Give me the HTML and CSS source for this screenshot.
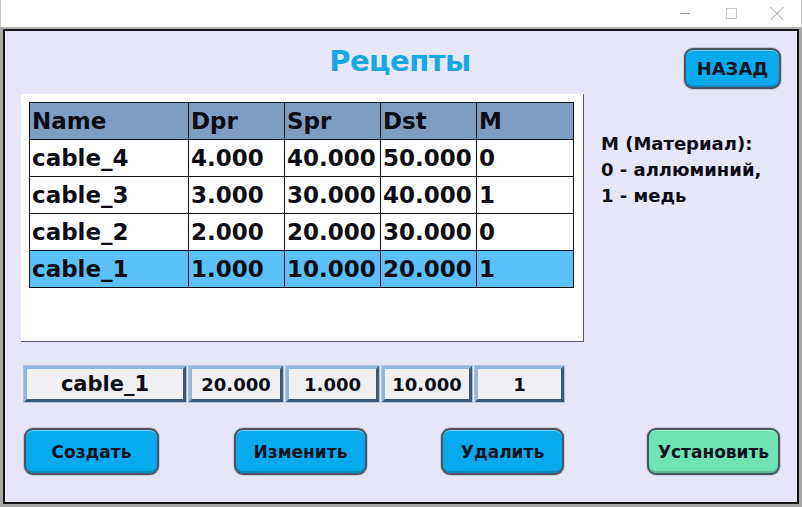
FILE: index.html
```html
<!DOCTYPE html>
<html lang="ru">
<head>
<meta charset="utf-8">
<title>Рецепты</title>
<link rel="stylesheet" href="styles.css">
</head>
<body>
<div class="window">
  <div class="titlebar">
    <svg class="ctl" width="30" height="27" viewBox="0 0 30 27"><line x1="10" y1="13.5" x2="20" y2="13.5" stroke="#9a9a9a" stroke-width="1"/></svg>
    <svg class="ctl" width="30" height="27" viewBox="0 0 30 27"><rect x="10.5" y="8.5" width="10" height="10" fill="none" stroke="#c8c8c8" stroke-width="1"/></svg>
    <svg class="ctl" width="30" height="27" viewBox="0 0 30 27"><path d="M8.5 7 L21.5 20 M21.5 7 L8.5 20" stroke="#9a9a9a" stroke-width="1" fill="none"/></svg>
  </div>
  <div class="frame">
    <div class="inner">
      <div class="header">
        <div></div>
        <h1 class="title">Рецепты</h1>
        <div class="header-right"><button class="btn btn-back">НАЗАД</button></div>
      </div>
      <div class="main">
        <div class="panel">
          <table class="grid">
            <colgroup>
              <col class="c-name"><col class="c-num"><col class="c-num"><col class="c-num"><col class="c-m">
            </colgroup>
            <thead>
              <tr><th>Name</th><th>Dpr</th><th>Spr</th><th>Dst</th><th>M</th></tr>
            </thead>
            <tbody>
              <tr><td>cable_4</td><td>4.000</td><td>40.000</td><td>50.000</td><td>0</td></tr>
              <tr><td>cable_3</td><td>3.000</td><td>30.000</td><td>40.000</td><td>1</td></tr>
              <tr><td>cable_2</td><td>2.000</td><td>20.000</td><td>30.000</td><td>0</td></tr>
              <tr class="selected"><td>cable_1</td><td>1.000</td><td>10.000</td><td>20.000</td><td>1</td></tr>
            </tbody>
          </table>
        </div>
        <div class="legend">
          <div>M (Материал):</div>
          <div>0 - аллюминий,</div>
          <div>1 - медь</div>
        </div>
      </div>
      <div class="fields">
        <div class="field f-name">cable_1</div>
        <div class="field f-a">20.000</div>
        <div class="field f-b">1.000</div>
        <div class="field f-c">10.000</div>
        <div class="field f-d">1</div>
      </div>
      <div class="actions">
        <div class="cell"><button class="btn btn-create">Создать</button></div>
        <div class="cell"><button class="btn btn-edit">Изменить</button></div>
        <div class="cell"><button class="btn btn-del">Удалить</button></div>
        <div class="cell"><button class="btn btn-set">Установить</button></div>
      </div>
    </div>
  </div>
</div>
</body>
</html>
```
FILE: styles.css
```css
* { box-sizing: border-box; }
html, body { margin: 0; padding: 0; }
body {
  width: 802px;
  height: 507px;
  overflow: hidden;
  background: #ffffff;
  font-family: "DejaVu Sans", Verdana, sans-serif;
  color: #0c0c14;
}
.window { width: 802px; height: 507px; display: flex; flex-direction: column; }
.titlebar {
  height: 27px;
  background: #ffffff;
  display: flex;
  justify-content: flex-end;
  padding-right: 9px;
  gap: 16px;
  border-left: 1px solid #c8c8c8;
  border-right: 1px solid #c8c8c8;
}
.ctl { display: block; }
.frame {
  flex: 1;
  border: 3px solid #a8a8a8;
  border-top: 2px solid #b4b4b4;
}
.inner {
  height: 100%;
  border: 2px solid #151515;
  background: #e6e6f8;
  padding: 14px 18px 0 16px;
}
.header {
  display: grid;
  grid-template-columns: 1fr auto 1fr;
  height: 44px;
  margin-bottom: 5px;
}
.title {
  margin: 0;
  font-size: 29px;
  line-height: 32px;
  font-weight: bold;
  color: #18a6e4;
  letter-spacing: -0.5px;
}
.header-right { display: flex; justify-content: flex-end; align-items: flex-start; }
.btn {
  font-family: "DejaVu Sans", Verdana, sans-serif;
  font-weight: bold;
  font-size: 17px;
  color: #0c1422;
  border: 2px solid #4a5560;
  border-radius: 9px;
  background: #08aaee;
  box-shadow: inset 0 1px 0 rgba(255,255,255,0.45), inset 0 -2px 0 rgba(0,0,0,0.18), 0 0 0 1px rgba(140,140,160,0.35);
  padding: 0;
  cursor: pointer;
}
.btn-back {
  margin-top: 3px;
  width: 97px;
  height: 41px;
  margin-right: -2px;
  font-size: 18px;
}
.main { display: flex; height: 248px; }
.panel {
  width: 563px;
  height: 248px;
  background: #ffffff;
  border-right: 1px solid #5a5a66;
  border-bottom: 1px solid #5a5a66;
  padding: 8px 0 0 8px;
}
.grid {
  border-collapse: collapse;
  table-layout: fixed;
  width: 545px;
  font-size: 23px;
  font-weight: bold;
}
.c-name { width: 159px; }
.c-num { width: 96px; }
.c-m { width: 97px; }
.grid th, .grid td {
  border: 1px solid #101018;
  height: 37px;
  padding: 0 0 0 2px;
  text-align: left;
  white-space: nowrap;
  overflow: hidden;
  line-height: 35px;
}
.grid th { background: #7e9dc2; }
.grid td { background: #ffffff; }
.grid .selected td { background: #5bc1f8; }
.legend {
  margin-left: 17px;
  margin-top: 37px;
  font-size: 18px;
  font-weight: bold;
  line-height: 26px;
}
.fields {
  display: flex;
  gap: 3px;
  margin-top: 24px;
  margin-left: 3px;
  height: 36px;
}
.field {
  height: 36px;
  background: #f0f0f2;
  border: 3px solid;
  border-color: #8fb6e0 #3c5877 #3c5877 #8fb6e0;
  display: flex;
  align-items: center;
  justify-content: center;
  font-weight: bold;
  font-size: 18px;
  box-shadow: 0 0 0 1px rgba(60,80,110,0.25);
}
.f-name { width: 162px; font-size: 21px; }
.f-a { width: 94px; }
.f-b { width: 93px; }
.f-c { width: 90px; }
.f-d { width: 89px; }
.actions {
  display: grid;
  grid-template-columns: 210px 207px 206px 140px;
  margin-top: 26px;
  margin-left: 3px;
}
.cell { display: flex; }
.actions .btn { height: 47px; }
.btn-create { width: 135px; }
.btn-edit { width: 133px; }
.btn-del { width: 123px; }
.btn-set { width: 133px; background: #6fe3b4; }
```
